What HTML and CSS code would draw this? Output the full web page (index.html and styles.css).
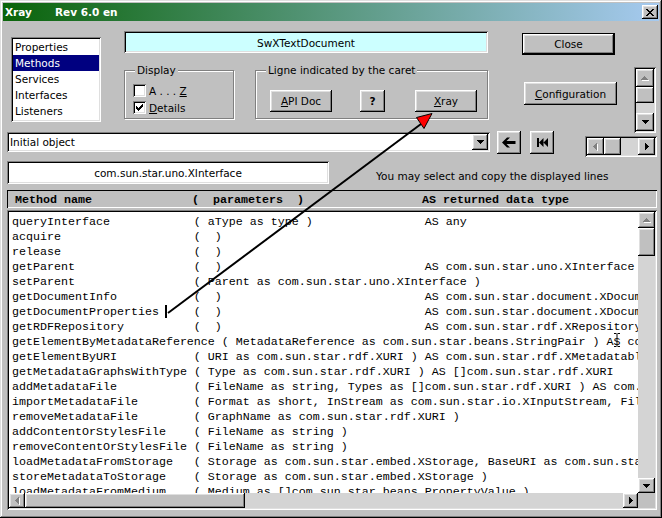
FILE: index.html
```html
<!DOCTYPE html>
<html>
<head>
<meta charset="utf-8">
<title>Xray</title>
<link rel="stylesheet" href="styles.css">
</head>
<body>
<div class="window">
  <div class="titlebar">
    <span class="title-app">Xray</span><span class="title-rev">Rev 6.0 en</span>
    <span class="title-close raised"><svg width="8" height="7" viewBox="0 0 8 7"><path d="M0 0h2v1H0z M6 0h2v1H6z M1 1h2v1H1z M5 1h2v1H5z M2 2h4v1H2z M3 3h2v1H3z M2 4h4v1H2z M1 5h2v1H1z M5 5h2v1H5z M0 6h2v1H0z M6 6h2v1H6z"/></svg></span>
  </div>
  <div class="body">
    <div class="top">
      <div class="listbox sunken">
        <div class="item">Properties</div>
        <div class="item sel">Methods</div>
        <div class="item">Services</div>
        <div class="item">Interfaces</div>
        <div class="item">Listeners</div>
      </div>
      <div class="midcol">
        <div class="objname sunken">SwXTextDocument</div>
        <div class="groups">
          <div class="group g-display">
            <span class="glabel">Display</span>
            <div class="chk-row first"><span class="chk sunken"></span><span>A . . . <u>Z</u></span></div>
            <div class="chk-row"><span class="chk sunken"><svg width="7" height="7" viewBox="0 0 7 7"><path d="M6 0h1v1H6z M5 1h2v1H5z M0 2h1v1H0z M4 2h3v1H4z M0 3h2v1H0z M3 3h3v1H3z M0 4h5v1H0z M1 5h3v1H1z M2 6h1v1H2z"/></svg></span><span><u>D</u>etails</span></div>
          </div>
          <div class="group g-ligne">
            <span class="glabel">Ligne indicated by the caret</span>
            <div class="btnrow">
              <div class="btn raised b-api"><span><u>A</u>PI Doc</span></div>
              <div class="btn raised b-q">?</div>
              <div class="btn raised b-xray"><span><u>X</u>ray</span></div>
            </div>
          </div>
        </div>
      </div>
      <div class="rightcol">
        <div class="btn default b-close">Close</div>
        <div class="btn raised b-config"><span><u>C</u>onfiguration</span></div>
      </div>
      <div class="vsb-frame sunken">
        <div class="sbtn raised s18"><svg width="8" height="5" viewBox="0 0 8 5"><path fill="#fff" d="M4 1h1v1H4z M3 2h3v1H3z M2 3h5v1H2z M1 4h7v1H1z"/><path fill="#808080" d="M3 0h1v1H3z M2 1h3v1H2z M1 2h5v1H1z M0 3h7v1H0z"/></svg></div>
        <div class="sbtn raised thumb16"></div>
        <div class="track small-vtrack"></div>
        <div class="sbtn raised s18"><svg width="7" height="4" viewBox="0 0 7 4"><path d="M0 0h7v1H0z M1 1h5v1H1z M2 2h3v1H2z M3 3h1v1H3z"/></svg></div>
      </div>
    </div>

    <div class="row2">
      <div class="combo sunken">
        <span class="combo-text">Initial object</span>
        <span class="combo-btn raised"><svg width="7" height="4" viewBox="0 0 7 4"><path d="M0 0h7v1H0z M1 1h5v1H1z M2 2h3v1H2z M3 3h1v1H3z"/></svg></span>
      </div>
      <div class="btn raised navbtn nav-back"><svg width="14" height="11" viewBox="0 0 14 11"><path d="M0 5.5 L5 0.5 H8 L4.5 4 H13.5 V7 H4.5 L8 10.5 H5 Z"/></svg></div>
      <div class="btn raised navbtn nav-first"><svg width="11" height="9" viewBox="0 0 11 9"><path d="M0 0h2v9H0z M2 4.5 L6.5 0 V9 Z M6.5 4.5 L11 0 V9 Z"/></svg></div>
      <div class="hsb-frame sunken">
        <div class="sbtn raised w17"><svg width="5" height="8" viewBox="0 0 5 8"><path fill="#fff" d="M1 4h1v1H1z M2 3h1v3H2z M3 2h1v5H3z M4 1h1v7H4z"/><path fill="#808080" d="M0 3h1v1H0z M1 2h1v3H1z M2 1h1v5H2z M3 0h1v7H3z"/></svg></div>
        <div class="sbtn raised w17"></div>
        <div class="track small-htrack"></div>
        <div class="sbtn raised w17"><svg width="4" height="7" viewBox="0 0 4 7"><path d="M0 0h1v7H0z M1 1h1v5H1z M2 2h1v3H2z M3 3h1v1H3z"/></svg></div>
      </div>
    </div>

    <div class="row3">
      <div class="iface sunken">com.sun.star.uno.XInterface</div>
      <div class="note">You may select and copy the displayed lines</div>
    </div>

    <div class="colhead"><span class="h1">Method name</span><span class="h2">(  parameters  )</span><span>AS returned data type</span></div>

    <div class="listing sunken">
      <div class="lines">
<div class="ln"><span class="n">queryInterface </span><span class="p">( aType as type ) </span>AS any</div>
<div class="ln"><span class="n">acquire </span>(  )</div>
<div class="ln"><span class="n">release </span>(  )</div>
<div class="ln"><span class="n">getParent </span><span class="p">(  ) </span>AS com.sun.star.uno.XInterface</div>
<div class="ln"><span class="n">setParent </span>( Parent as com.sun.star.uno.XInterface )</div>
<div class="ln"><span class="n">getDocumentInfo </span><span class="p">(  ) </span>AS com.sun.star.document.XDocumentInfo</div>
<div class="ln"><span class="n">getDocumentProperties </span><span class="p">(  ) </span>AS com.sun.star.document.XDocumentProperties</div>
<div class="ln"><span class="n">getRDFRepository </span><span class="p">(  ) </span>AS com.sun.star.rdf.XRepository</div>
<div class="ln"><span class="n">getElementByMetadataReference </span><span class="p">( MetadataReference as com.sun.star.beans.StringPair ) </span>AS com.sun.star.rdf.XMetadatable</div>
<div class="ln"><span class="n">getElementByURI </span><span class="p">( URI as com.sun.star.rdf.XURI ) </span>AS com.sun.star.rdf.XMetadatable</div>
<div class="ln"><span class="n">getMetadataGraphsWithType </span><span class="p">( Type as com.sun.star.rdf.XURI ) </span>AS []com.sun.star.rdf.XURI</div>
<div class="ln"><span class="n">addMetadataFile </span><span class="p">( FileName as string, Types as []com.sun.star.rdf.XURI ) </span>AS com.sun.star.rdf.XURI</div>
<div class="ln"><span class="n">importMetadataFile </span><span class="p">( Format as short, InStream as com.sun.star.io.XInputStream, FileName as string, BaseURI as com.sun.star.rdf.XURI, Types as []com.sun.star.rdf.XURI ) </span>AS com.sun.star.rdf.XURI</div>
<div class="ln"><span class="n">removeMetadataFile </span>( GraphName as com.sun.star.rdf.XURI )</div>
<div class="ln"><span class="n">addContentOrStylesFile </span>( FileName as string )</div>
<div class="ln"><span class="n">removeContentOrStylesFile </span>( FileName as string )</div>
<div class="ln"><span class="n">loadMetadataFromStorage </span>( Storage as com.sun.star.embed.XStorage, BaseURI as com.sun.star.rdf.XURI, InteractionHandler as com.sun.star.task.XInteractionHandler )</div>
<div class="ln"><span class="n">storeMetadataToStorage </span>( Storage as com.sun.star.embed.XStorage )</div>
<div class="ln"><span class="n">loadMetadataFromMedium </span>( Medium as []com.sun.star.beans.PropertyValue )</div>
      </div>
      <div class="vsb-big">
        <div class="sbtn raised h16"><svg width="8" height="5" viewBox="0 0 8 5"><path fill="#fff" d="M4 1h1v1H4z M3 2h3v1H3z M2 3h5v1H2z M1 4h7v1H1z"/><path fill="#808080" d="M3 0h1v1H3z M2 1h3v1H2z M1 2h5v1H1z M0 3h7v1H0z"/></svg></div>
        <div class="sbtn raised thumb28"></div>
        <div class="track"></div>
        <div class="sbtn raised h15"><svg width="7" height="4" viewBox="0 0 7 4"><path d="M0 0h7v1H0z M1 1h5v1H1z M2 2h3v1H2z M3 3h1v1H3z"/></svg></div>
      </div>
      <div class="hsb-big">
        <div class="sbtn raised w16"><svg width="5" height="8" viewBox="0 0 5 8"><path fill="#fff" d="M1 4h1v1H1z M2 3h1v3H2z M3 2h1v5H3z M4 1h1v7H4z"/><path fill="#808080" d="M0 3h1v1H0z M1 2h1v3H1z M2 1h1v5H2z M3 0h1v7H3z"/></svg></div>
        <div class="sbtn raised hthumb"></div>
        <div class="track"></div>
        <div class="sbtn raised w15"><svg width="4" height="7" viewBox="0 0 4 7"><path d="M0 0h1v7H0z M1 1h1v5H1z M2 2h1v3H2z M3 3h1v1H3z"/></svg></div>
      </div>
      <div class="corner"></div>
    </div>
  </div>

  <svg class="overlay" width="662" height="518" viewBox="0 0 662 518">
    <line x1="168" y1="313" x2="421" y2="124" stroke="#000" stroke-width="2"/>
    <polygon points="416.5,117.5 432,113.5 424,128.5" fill="#ff0000" stroke="#000" stroke-width="1" stroke-linejoin="round"/>
    <rect x="165" y="305" width="2" height="13" fill="#000"/>
    <path d="M614 333.5h2.5 M617.5 333.5h2.5 M617 334v12 M614 346.5h2.5 M617.5 346.5h2.5" stroke="#000" stroke-width="1" fill="none"/>
  </svg>
</div>
</body>
</html>
```

FILE: styles.css
```css
* { box-sizing: border-box; }
html, body { margin: 0; padding: 0; background: #c0c0c0; }
body { font-family: "DejaVu Sans", sans-serif; font-size: 10.5px; color: #000; }

.raised {
  background: #c0c0c0;
  box-shadow: inset -1px -1px #000, inset 1px 1px #fff, inset -2px -2px #808080, inset 2px 2px #dfdfdf;
}
.sunken {
  box-shadow: inset 1px 1px #808080, inset -1px -1px #fff, inset 2px 2px #000, inset -2px -2px #dfdfdf;
}
.default {
  background: #c0c0c0;
  box-shadow: inset 0 0 0 1px #000, inset -2px -2px #000, inset 2px 2px #fff, inset -3px -3px #808080, inset 3px 3px #dfdfdf;
}

.window {
  position: relative;
  width: 662px;
  height: 518px;
  padding: 3px;
  background: #c0c0c0;
  box-shadow: inset -1px -1px #000, inset 1px 1px #dfdfdf, inset -2px -2px #808080, inset 2px 2px #fff;
}

.titlebar {
  height: 18px;
  display: flex;
  align-items: center;
  padding-left: 2px;
  color: #fff;
  font-weight: bold;
  font-size: 10.5px;
  background: linear-gradient(to right, #0a640a, #a6caf0);
}
.title-app { width: 50px; }
.title-close {
  margin-left: auto;
  margin-right: 1px;
  width: 16px;
  height: 14px;
  display: flex;
  align-items: center;
  justify-content: center;
}

.top { display: flex; align-items: flex-start; height: 109px; }
.listbox {
  margin-left: 8px;
  margin-top: 16px;
  width: 90px;
  height: 85px;
  background: #fff;
  padding: 2px;
}
.item { height: 16px; line-height: 16px; padding-left: 2px; }
.item.sel { background: #000080; color: #fff; }

.midcol { margin-left: 23px; width: 364px; }
.objname {
  margin-top: 10px;
  height: 22px;
  background: #ccffff;
  display: flex;
  align-items: center;
  justify-content: center;
  padding-top: 1px;
}
.groups { display: flex; margin-top: 17px; gap: 21px; }
.group {
  height: 49px;
  border: 1px solid #808080;
  box-shadow: inset 1px 1px #fff, 1px 1px #fff;
  display: flex;
  flex-direction: column;
}
.g-display { width: 110px; }
.g-ligne { width: 233px; }
.glabel {
  align-self: flex-start;
  margin-top: -7px;
  margin-left: 10px;
  padding: 0 2px;
  height: 13px;
  line-height: 13px;
  background: #c0c0c0;
}
.chk-row { display: flex; align-items: center; height: 17px; margin-left: 8px; }
.chk-row.first { margin-top: 5px; }
.chk {
  width: 13px;
  height: 13px;
  background: #fff;
  margin-right: 3px;
  display: flex;
  align-items: center;
  justify-content: center;
}
.btnrow { display: flex; margin-left: 14px; margin-top: 13px; }
.btn { display: flex; align-items: center; justify-content: center; }
.b-api { width: 62px; height: 22px; }
.b-q { width: 25px; height: 22px; margin-left: 28px; font-weight: bold; }
.b-xray { width: 62px; height: 22px; margin-left: 30px; }

.rightcol { margin-left: 34px; display: flex; flex-direction: column; align-items: flex-start; }
.b-close { margin-top: 12px; width: 93px; height: 22px; }
.b-config { margin-top: 27px; margin-left: 2px; width: 93px; height: 23px; }

.vsb-frame {
  margin-left: 17px;
  margin-top: 46px;
  width: 22px;
  height: 66px;
  padding: 2px;
  display: flex;
  flex-direction: column;
}
.sbtn { display: flex; align-items: center; justify-content: center; flex: none; }
.s18 { height: 18px; }
.thumb16 { height: 16px; }
.small-vtrack { height: 10px; }
.track { background: #d4d4d4; flex: 1; }

.row2 { display: flex; align-items: flex-start; height: 27px; }
.combo {
  margin-left: 4px;
  margin-top: 2px;
  width: 483px;
  height: 20px;
  background: #fff;
  padding: 2px;
  display: flex;
  align-items: center;
}
.combo-text { padding-left: 1px; }
.combo-btn {
  margin-left: auto;
  width: 16px;
  height: 16px;
  display: flex;
  align-items: center;
  justify-content: center;
}
.navbtn { width: 24px; height: 23px; margin-top: 1px; }
.nav-back { margin-left: 7px; }
.nav-first { margin-left: 9px; }
.hsb-frame {
  margin-left: 31px;
  margin-top: 6px;
  width: 72px;
  height: 21px;
  padding: 2px;
  display: flex;
}
.w17 { width: 17px; }
.small-htrack { width: 17px; flex: none; }

.row3 { display: flex; margin-top: 4px; height: 23px; }
.iface {
  margin-left: 4px;
  width: 322px;
  height: 23px;
  background: #fff;
  display: flex;
  align-items: center;
  justify-content: center;
}
.note { margin-left: 47px; margin-top: 8px; line-height: 14px; }

.colhead {
  margin: 6px 0 0 4px;
  width: 650px;
  height: 18px;
  padding-left: 8px;
  padding-top: 1px;
  display: flex;
  align-items: center;
  font-family: "Liberation Mono", monospace;
  font-size: 11.667px;
  font-weight: bold;
  white-space: pre;
  box-shadow: inset 1px 1px #000, inset -1px -1px #fff;
}
.h1 { width: 177px; }
.h2 { width: 230px; }

.listing {
  margin: 2px 0 0 4px;
  width: 650px;
  height: 300px;
  padding: 2px;
  display: grid;
  grid-template-columns: 629px 17px;
  grid-template-rows: 281px 15px;
}
.lines {
  background: #fff;
  overflow: hidden;
  padding: 3px 0 0 3px;
  font-family: "Liberation Mono", monospace;
  font-size: 11.667px;
  line-height: 15px;
}
.ln { height: 15px; white-space: pre; }
.n { display: inline-block; min-width: 26ch; }
.p { display: inline-block; min-width: 33ch; }

.vsb-big { display: flex; flex-direction: column; }
.h16 { height: 16px; }
.h15 { height: 15px; }
.thumb28 { height: 28px; }
.hsb-big { display: flex; }
.w16 { width: 16px; }
.w15 { width: 15px; }
.hthumb { width: 220px; }
.corner { background: #c0c0c0; }

.overlay { position: absolute; left: 0; top: 0; pointer-events: none; }
```
